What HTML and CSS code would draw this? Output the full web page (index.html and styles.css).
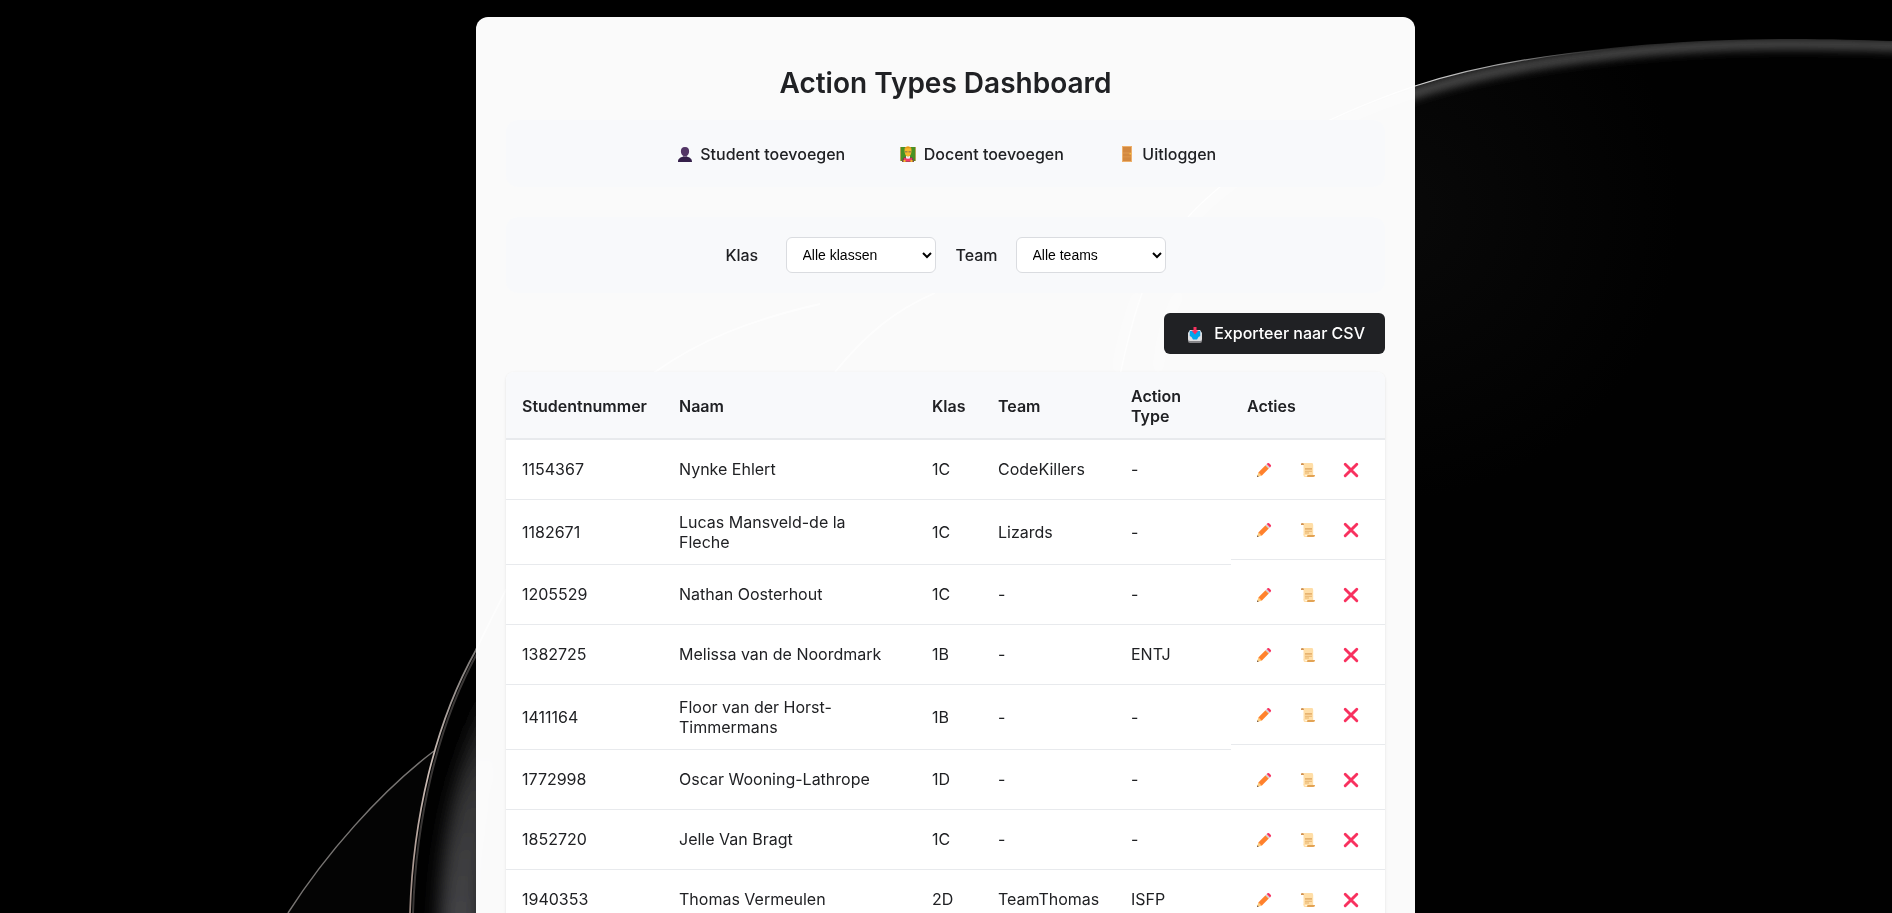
FILE: index.html
```html
<!DOCTYPE html>
<html lang="nl">
<head>
<meta charset="utf-8">
<title>Action Types Dashboard</title>
<link rel="stylesheet" href="styles.css">
</head>
<body>
<svg class="backdrop" viewBox="0 0 1892 913" preserveAspectRatio="xMidYMin slice" aria-hidden="true">
  <defs>
    <filter id="soft" x="-20%" y="-20%" width="140%" height="140%"><feGaussianBlur stdDeviation="4"/></filter>
    <filter id="wide" x="-100%" y="-50%" width="300%" height="200%"><feGaussianBlur stdDeviation="9"/></filter>
    <linearGradient id="edge" gradientUnits="userSpaceOnUse" x1="1400" y1="0" x2="1620" y2="0"><stop offset="0" stop-color="#ddd"/><stop offset=".5" stop-color="#999"/><stop offset="1" stop-color="#444" stop-opacity="0"/></linearGradient>
    <linearGradient id="rim" gradientUnits="userSpaceOnUse" x1="0" y1="913" x2="0" y2="620"><stop offset="0" stop-color="#9a8780"/><stop offset=".5" stop-color="#cfc0b9"/><stop offset="1" stop-color="#666"/></linearGradient>
    <linearGradient id="sheen" gradientUnits="userSpaceOnUse" x1="0" y1="913" x2="0" y2="690"><stop offset="0" stop-color="#434346"/><stop offset=".5" stop-color="#363637"/><stop offset="1" stop-color="#1c1c1c"/></linearGradient>
    <radialGradient id="glow" gradientUnits="userSpaceOnUse" cx="1390" cy="210" r="290"><stop offset="0" stop-color="#090909"/><stop offset="1" stop-color="#010101"/></radialGradient>
    <clipPath id="right"><path d="M1115 400C1135 295 1155 248 1188 217C1235 165 1320 118 1415 86C1510 55 1650 39 1790 39C1830 39 1865 40 1892 41V913H1115Z"/></clipPath>
    <clipPath id="left"><path d="M410 913C413 820 434 725 476 650C530 545 620 350 820 304V913Z"/></clipPath>
  </defs>
  <rect width="1892" height="913" fill="#000"/>
  <g clip-path="url(#right)">
    <rect x="1100" width="792" height="913" fill="url(#glow)"/>
    <path d="M1188 225C1235 172 1320 125 1415 93C1510 62 1650 44 1790 44C1830 44 1865 45 1900 46" fill="none" stroke="#484848" stroke-width="11" filter="url(#soft)"/>
  </g>
  <path d="M1115 400C1135 295 1155 248 1188 217C1235 165 1320 118 1415 86C1480 65 1550 54 1620 48.500" fill="none" stroke="url(#edge)" stroke-width="1.200"/>
  <path d="M288 913C325 855 380 792 434 751L412 913Z" fill="#040404"/>
  <path d="M288 913C325 855 380 792 434 751" fill="none" stroke="#777472" stroke-width="1.500"/>
  <g clip-path="url(#left)">
    <rect x="400" y="300" width="420" height="613" fill="#010101"/>
    <path d="M460 950C460 860 472 780 508 700" fill="none" stroke="url(#sheen)" stroke-width="42" filter="url(#wide)"/>
    <path d="M413 913C416 820 437 725 479 650" fill="none" stroke="#3a3736" stroke-width="2"/>
  </g>
  <path d="M410 913C413 820 434 725 476 650" fill="none" stroke="url(#rim)" stroke-width="1.700"/>
  <path d="M476 650C520 560 590 420 655 372C700 340 750 320 820 304M835 372C865 335 895 310 935 293" fill="none" stroke="#aaa" stroke-width="1.800"/>
  <path d="M1117 372C1120 345 1130 315 1138 293M1158 372C1160 345 1167 315 1180 293" fill="none" stroke="#888" stroke-width="7" filter="url(#soft)"/>
</svg>

<svg class="sprite" aria-hidden="true">
  <symbol id="person" viewBox="0 0 16 16"><path d="M8 1c3 0 4.300 2 4.100 4.700C12 7.600 11 9 9.800 9.800v1H6.200v-1C5 9 4 7.600 3.900 5.700 3.700 3 5 1 8 1Z" fill="#533566"/><path d="M1 16c0-3.500 2-4.300 5.200-5.500 1 .8 2.600.8 3.600 0C13 11.700 15 12.500 15 16Z" fill="#35204a"/></symbol>
  <symbol id="teacher" viewBox="0 0 16 16"><path d="M0 1h16v14H0Z" fill="#489225"/><path d="M0 1h1v14H0ZM15 1h1v14h-1Z" fill="#b7a55c"/><path d="M2 16c0-3 1-5 4-5h4c3 0 4 2 4 5Z" fill="#7c4c45"/><path d="M6 10h4v3H6Z" fill="#eee"/><path d="M4.500 4c0-5 7-5 7 0 0 4-1.200 6.500-3.500 6.500S4.500 8 4.500 4Z" fill="#f6b82c"/><path d="M4.500 3C5 0 11 0 11.500 3L10 2.300H6Z" fill="#e8941d"/><path d="M5 5h2.500v1.500H5zM8.500 5H11v1.500H8.500Z" fill="#a88345"/><path d="M4 12l4 .8 4-.8v3.500H4Z" fill="#f43b66"/><path d="M3.500 14h2v2h-2zM10.500 14h2v2h-2z" fill="#f6b82c"/></symbol>
  <symbol id="door" viewBox="0 0 16 16"><path d="M3 0h10v16H3Z" fill="#eeb06b"/><path d="M4 1h8v14H4Z" fill="#d3883e"/><path d="M4 6.500h8v1H4zM4 10.500h8v.8H4z" fill="#df9a50"/><path d="M10.500 7h1.500v1.500h-1.500z" fill="#f9c23c"/></symbol>
  <symbol id="inbox" viewBox="0 0 16 16"><path d="M1 7l2-4h10l2 4v7q0 2-2 2H3q-2 0-2-2Z" fill="#858588"/><path d="M1 6l2-3h10l2 3v6q0 2-2 2H3q-2 0-2-2Z" fill="#dedee0"/><path d="M2.800 4h10.400v5l-1.700 1-1.500 2.500H6L4.500 10l-1.700-1Z" fill="#00a6ed"/><path d="M6.500 0h3v3.500h2L8 7.500 4.500 3.500h2Z" fill="#f8315f"/></symbol>
  <symbol id="pencil" viewBox="0 0 16 16"><path d="M1 15l1.300-4.600 3.400 3.300Z" fill="#ffce7c"/><path d="M1 15l.5-1.700 1.200 1.200Z" fill="#553b2f"/><path d="M2.300 10.400L9.500 3.300l3.300 3.300-7.100 7.100Z" fill="#ff822d"/><path d="M9.500 3.300l1.200-1.200L14 5.400l-1.200 1.200Z" fill="#d3d3d3"/><path d="M10.700 2.100l.8-.8q.8-.6 1.600 0l1.700 1.700q.6.800 0 1.600L14 5.400Z" fill="#f8315f"/></symbol>
  <symbol id="scroll" viewBox="0 0 16 16"><path d="M2.500 1H12q1.200.2 1.200 2v10H3.500V3Z" fill="#ffdea7"/><path d="M1 2q0-1 1.200-1 1.800 0 1.800 2H1Z" fill="#d09150"/><path d="M3.500 12v1.500q0 1.500 2 1.500H13q2 0 2-2H7.500q-.3 1-1.500.8T3.500 12Z" fill="#ffdea7"/><path d="M7.500 13H15q0 2-1.800 2H6.500q1 0 1-2Z" fill="#e2a355"/><path d="M5 6h7v1.700H5zM5 8.700h7v1H5zM5 10.500h4v1H5z" fill="#e7b36f"/></symbol>
  <symbol id="cross" viewBox="0 0 16 16"><path d="M2.200 2.200l11.600 11.600M13.800 2.200L2.200 13.800" fill="none" stroke="#f8315f" stroke-width="2.900" stroke-linecap="round"/></symbol>
</svg>

<main class="card">
  <h1 class="title">Action Types Dashboard</h1>
  <nav class="menu">
    <a class="menu-link"><svg class="icon"><use href="#person"/></svg>Student toevoegen</a>
    <a class="menu-link"><svg class="icon"><use href="#teacher"/></svg>Docent toevoegen</a>
    <a class="menu-link"><svg class="icon"><use href="#door"/></svg>Uitloggen</a>
  </nav>
  <form class="filters">
    <div class="filter"><label class="filter-label" for="klas">Klas</label><select class="select" id="klas"><option>Alle klassen</option></select></div>
    <div class="filter"><label class="filter-label" for="team">Team</label><select class="select" id="team"><option>Alle teams</option></select></div>
  </form>
  <div class="toolbar"><button class="export"><svg class="icon"><use href="#inbox"/></svg>Exporteer naar CSV</button></div>
  <table class="students">
    <colgroup><col class="c-number"><col class="c-name"><col class="c-class"><col class="c-team"><col class="c-type"><col class="c-actions"></colgroup>
    <thead><tr><th>Studentnummer</th><th>Naam</th><th>Klas</th><th>Team</th><th>Action Type</th><th>Acties</th></tr></thead>
    <tbody>
      <tr><td>1154367</td><td>Nynke Ehlert</td><td>1C</td><td>CodeKillers</td><td>-</td><td class="actions"><svg class="icon"><use href="#pencil"/></svg><svg class="icon"><use href="#scroll"/></svg><svg class="icon"><use href="#cross"/></svg></td></tr>
      <tr><td>1182671</td><td>Lucas Mansveld-de la Fleche</td><td>1C</td><td>Lizards</td><td>-</td><td class="actions"><svg class="icon"><use href="#pencil"/></svg><svg class="icon"><use href="#scroll"/></svg><svg class="icon"><use href="#cross"/></svg></td></tr>
      <tr><td>1205529</td><td>Nathan Oosterhout</td><td>1C</td><td>-</td><td>-</td><td class="actions"><svg class="icon"><use href="#pencil"/></svg><svg class="icon"><use href="#scroll"/></svg><svg class="icon"><use href="#cross"/></svg></td></tr>
      <tr><td>1382725</td><td>Melissa van de Noordmark</td><td>1B</td><td>-</td><td>ENTJ</td><td class="actions"><svg class="icon"><use href="#pencil"/></svg><svg class="icon"><use href="#scroll"/></svg><svg class="icon"><use href="#cross"/></svg></td></tr>
      <tr><td>1411164</td><td>Floor van der Horst-Timmermans</td><td>1B</td><td>-</td><td>-</td><td class="actions"><svg class="icon"><use href="#pencil"/></svg><svg class="icon"><use href="#scroll"/></svg><svg class="icon"><use href="#cross"/></svg></td></tr>
      <tr><td>1772998</td><td>Oscar Wooning-Lathrope</td><td>1D</td><td>-</td><td>-</td><td class="actions"><svg class="icon"><use href="#pencil"/></svg><svg class="icon"><use href="#scroll"/></svg><svg class="icon"><use href="#cross"/></svg></td></tr>
      <tr><td>1852720</td><td>Jelle Van Bragt</td><td>1C</td><td>-</td><td>-</td><td class="actions"><svg class="icon"><use href="#pencil"/></svg><svg class="icon"><use href="#scroll"/></svg><svg class="icon"><use href="#cross"/></svg></td></tr>
      <tr><td>1940353</td><td>Thomas Vermeulen</td><td>2D</td><td>TeamThomas</td><td>ISFP</td><td class="actions"><svg class="icon"><use href="#pencil"/></svg><svg class="icon"><use href="#scroll"/></svg><svg class="icon"><use href="#cross"/></svg></td></tr>
    </tbody>
  </table>
</main>
</body>
</html>
```
FILE: styles.css
```css
* { box-sizing: border-box; }
body {
  margin: 0;
  padding: 17px 1px 0 0;
  height: 100vh;
  overflow: hidden;
  background: #000;
  color: #202124;
  font: 16px/20px Inter, sans-serif;
}
.backdrop { position: fixed; inset: 0; width: 100%; height: 100%; z-index: -1; }
.sprite { display: none; }
.icon { width: 16px; height: 16px; flex: none; }
.card {
  width: 939px;
  margin: 0 auto;
  padding: 49px 30px 0;
  border-radius: 12px;
  background: rgba(255, 255, 255, 0.98);
}
.title { margin: 0; text-align: center; font-size: 28px; line-height: 35px; font-weight: 600; }
.menu {
  display: flex;
  justify-content: center;
  align-items: center;
  gap: 53px;
  height: 67px;
  margin-top: 19px;
  border-radius: 12px;
  background: #f8f9fb;
}
.menu-link { display: flex; align-items: center; gap: 7.5px; padding-left: 2px; font-weight: 500; white-space: nowrap; }
.filters {
  display: flex;
  justify-content: center;
  align-items: center;
  gap: 20px;
  height: 76px;
  margin: 30px 0 0;
  border-radius: 12px;
  background: #f8f9fb;
}
.filter { display: flex; align-items: center; }
.filter-label { min-width: 60px; font-weight: 500; }
.select {
  width: 150px;
  height: 36px;
  padding: 8px 12px;
  border: 1px solid #dadce0;
  border-radius: 6px;
  background: #fff;
  color: #000;
  font: 14px "Liberation Sans", Arial, sans-serif;
}
.toolbar { display: flex; justify-content: flex-end; margin: 20px 0 18px; }
.export {
  display: flex;
  align-items: center;
  gap: 11px;
  height: 41px;
  padding: 0 20px 1px 23px;
  border: 0;
  border-radius: 6px;
  background: #202124;
  color: #fff;
  font: 500 16px/20px Inter, sans-serif;
  white-space: nowrap;
}
.export .icon { margin-top: 3px; }
.students {
  width: 100%;
  table-layout: fixed;
  border-collapse: separate;
  border-spacing: 0;
  border-radius: 8px;
  overflow: hidden;
  background: #fff;
  box-shadow: 0 1px 3px rgba(0, 0, 0, 0.1);
}
.c-number { width: 157px; }
.c-name { width: 253px; }
.c-class { width: 66px; }
.c-team { width: 133px; }
.c-type { width: 116px; }
.c-actions { width: 154px; }
th { height: 68px; padding: 2px 16px 0; text-align: left; font-weight: 600; background: #f8f9fb; border-bottom: 2px solid #e8eaed; }
td { height: 60px; padding: 11.75px 16px 12.25px; border-bottom: 1px solid #e8eaed; }
.actions { display: flex; align-items: center; gap: 27.500px; padding: 1px 16px 0 25px; }
```
